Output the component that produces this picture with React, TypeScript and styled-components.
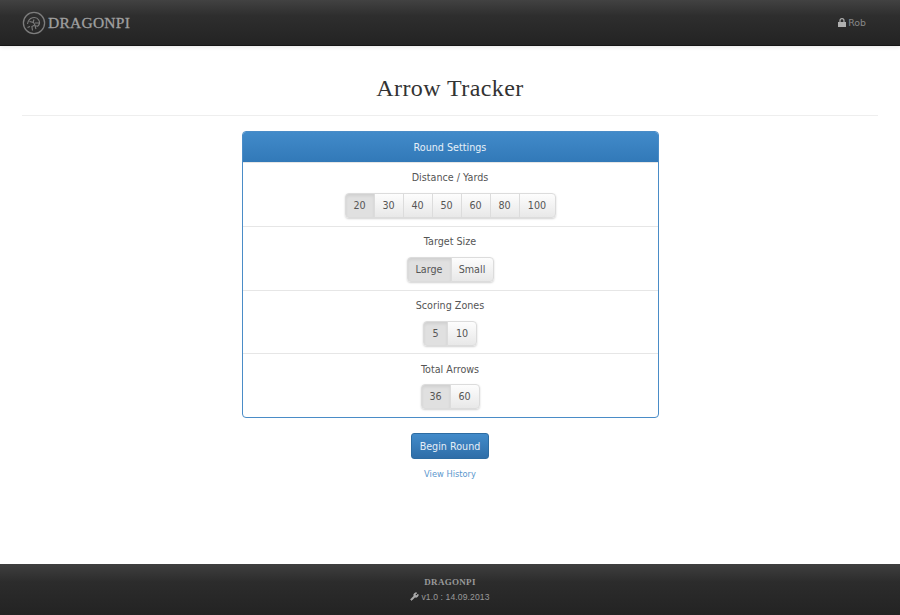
import React from "react";
import styled, { createGlobalStyle } from "styled-components";
import { Wrench } from "lucide-react";

const Global = createGlobalStyle`
  html, body { margin: 0; padding: 0; height: 100%; background: #fff; }
  body { font-family: "DejaVu Sans", "Liberation Sans", sans-serif; font-size: 9.6px; color: #333; }
  #root { height: 100%; }
`;

const Page = styled.div`
  height: 615px; display: flex; flex-direction: column; overflow: hidden;
`;
const NavBar = styled.header`
  height: 46px; box-sizing: border-box; flex: none; display: flex; align-items: center; justify-content: space-between;
  padding: 0 34px 0 22px; background: linear-gradient(#424242, #2e2e2e 35%, #232323);
  border-bottom: 1px solid #151515; box-shadow: 0 1px 4px rgba(0,0,0,.1);
`;
const Brand = styled.div`display: flex; align-items: center; gap: 2px;`;
const BrandName = styled.span`
  font-family: "Liberation Serif", serif; font-size: 15.5px; font-weight: 400; letter-spacing: .25px; color: #a0a0a0;
  -webkit-text-stroke: .3px #a0a0a0;
`;
const UserLink = styled.span`
  display: flex; align-items: center; gap: 2px; color: #888; font-size: 9.4px;
`;
const Main = styled.main`flex: 1; padding: 0 22px; display: flex; flex-direction: column; align-items: center;`;
const TitleBar = styled.div`
  align-self: stretch; height: 70px; box-sizing: border-box; border-bottom: 1px solid #eee; display: flex; align-items: center; justify-content: center; padding-top: 15px;
`;
const Title = styled.h1`
  margin: 0; font-family: "Liberation Serif", serif; font-weight: 400; font-size: 24px; letter-spacing: .42px; color: #333;
`;
const Panel = styled.section`
  width: 415px; margin-top: 15px; border: 1px solid #4a8cc7; border-radius: 4px; background: #fff; overflow: hidden;
`;
const PanelHead = styled.div`
  height: 31px; box-sizing: border-box; padding-top: 1px; margin: -1px -1px 0; display: flex; align-items: center; justify-content: center; color: #e6f0f8;
  background: linear-gradient(#428bca, #3279b8);
`;
const Group = styled.div<{ $h: number }>`
  height: ${p => p.$h}px; display: flex; flex-direction: column; align-items: center; border-top: 1px solid #e6e6e6;
  &:first-of-type { border-top: 0; }
`;
const GroupLabel = styled.div<{ $top: number }>`margin-top: ${p => p.$top}px; height: 15px; line-height: 15px; color: #555;`;
const BtnGroup = styled.div<{ $top: number }>`
  display: flex; margin-top: ${p => p.$top}px; border-radius: 4px; box-shadow: 0 1px 2px rgba(0,0,0,.18);
`;
const Btn = styled.div<{ $active?: boolean; $w: number }>`
  width: ${p => p.$w}px; height: 25px; display: flex; align-items: center; justify-content: center; box-sizing: border-box;
  color: #555; border: 1px solid #dcdcdc; margin-left: -1px;
  background: ${p => p.$active ? "#e0e0e0" : "linear-gradient(#fdfdfd, #e8e8e8)"};
  ${p => p.$active ? "box-shadow: inset 0 2px 3px rgba(0,0,0,.07);" : ""}
  &:first-child { border-radius: 4px 0 0 4px; margin-left: 0; }
  &:last-child { border-radius: 0 4px 4px 0; }
`;
const Primary = styled.div`
  margin-top: 15px; width: 78px; height: 26px; box-sizing: border-box; display: flex; align-items: center; justify-content: center;
  color: #e4eef7; border: 1px solid #2d6ca2; border-radius: 3px; background: linear-gradient(#428bca, #2f6ea8);
`;
const HistoryLink = styled.a`margin-top: 8px; color: #5b97cd; font-size: 8.3px; height: 14px; line-height: 14px;`;
const Footer = styled.footer`
  height: 51px; flex: none; display: flex; flex-direction: column; align-items: center; padding-top: 12px; box-sizing: border-box;
  background: linear-gradient(#3f3f3f, #2c2c2c 35%, #232323);
`;
const FootBrand = styled.div`font-family: "Liberation Serif", serif; font-weight: 700; font-size: 9px; letter-spacing: .3px; color: #999; height: 12px; line-height: 12px;`;
const FootLine = styled.div`display: flex; align-items: center; gap: 2px; margin-top: 2px; color: #999; font-family: "Liberation Sans", sans-serif; font-size: 8.6px; letter-spacing: .1px; height: 13px;`;

const Logo = () => (
  <svg width="24" height="24" viewBox="0 0 24 24" fill="none" stroke="#7d7d7d">
    <circle cx="12" cy="12" r="10.6" strokeWidth="1.3" />
    <path d="M5.5 13c.6-3.5 2.6-5.6 5-6.2 2.5-.6 5 .2 6.2 2.2 1.3 2.2.6 5-1.4 6.6M7.5 10.5l4 1 1.4 2.6-3 1.4.6 4M12 8.5l-1 3M13 12h4M13 15h3M14 18l-1-3M8 15.5l-2.5 1" strokeWidth="1.1" />
  </svg>
);

const LockIcon = () => (
  <svg width="8" height="9" viewBox="0 0 8 9" fill="#b0b0b0">
    <path d="M1.4 4V2.7a2.6 2.6 0 0 1 5.2 0V4H8v5H0V4zM2.6 4h2.8V2.7a1.4 1.4 0 0 0-2.8 0z" fillRule="evenodd" />
  </svg>
);

const groups = [
  { label: "Distance / Yards", h: 63, top: 7, items: [["20", 30], ["30", 30], ["40", 30], ["50", 30], ["60", 30], ["80", 30], ["100", 37]] },
  { label: "Target Size", h: 63, top: 7, items: [["Large", 45], ["Small", 43]] },
  { label: "Scoring Zones", h: 62, top: 7, items: [["5", 25], ["10", 30]] },
  { label: "Total Arrows", h: 63, top: 8, items: [["36", 30], ["60", 30]] },
] as const;

export default function App() {
  return (
    <Page>
      <Global />
      <NavBar>
        <Brand><Logo /><BrandName>DRAGONPI</BrandName></Brand>
        <UserLink><LockIcon />Rob</UserLink>
      </NavBar>
      <Main>
        <TitleBar><Title>Arrow Tracker</Title></TitleBar>
        <Panel>
          <PanelHead>Round Settings</PanelHead>
          {groups.map(g => (
            <Group key={g.label} $h={g.h}>
              <GroupLabel $top={g.top}>{g.label}</GroupLabel>
              <BtnGroup $top={15 - g.top}>
                {g.items.map(([t, w], i) => <Btn key={t} $w={w} $active={i === 0}>{t}</Btn>)}
              </BtnGroup>
            </Group>
          ))}
        </Panel>
        <Primary>Begin Round</Primary>
        <HistoryLink>View History</HistoryLink>
      </Main>
      <Footer>
        <FootBrand>DRAGONPI</FootBrand>
        <FootLine><Wrench size={9} fill="#aaa" stroke="#aaa" />v1.0 : 14.09.2013</FootLine>
      </Footer>
    </Page>
  );
}
